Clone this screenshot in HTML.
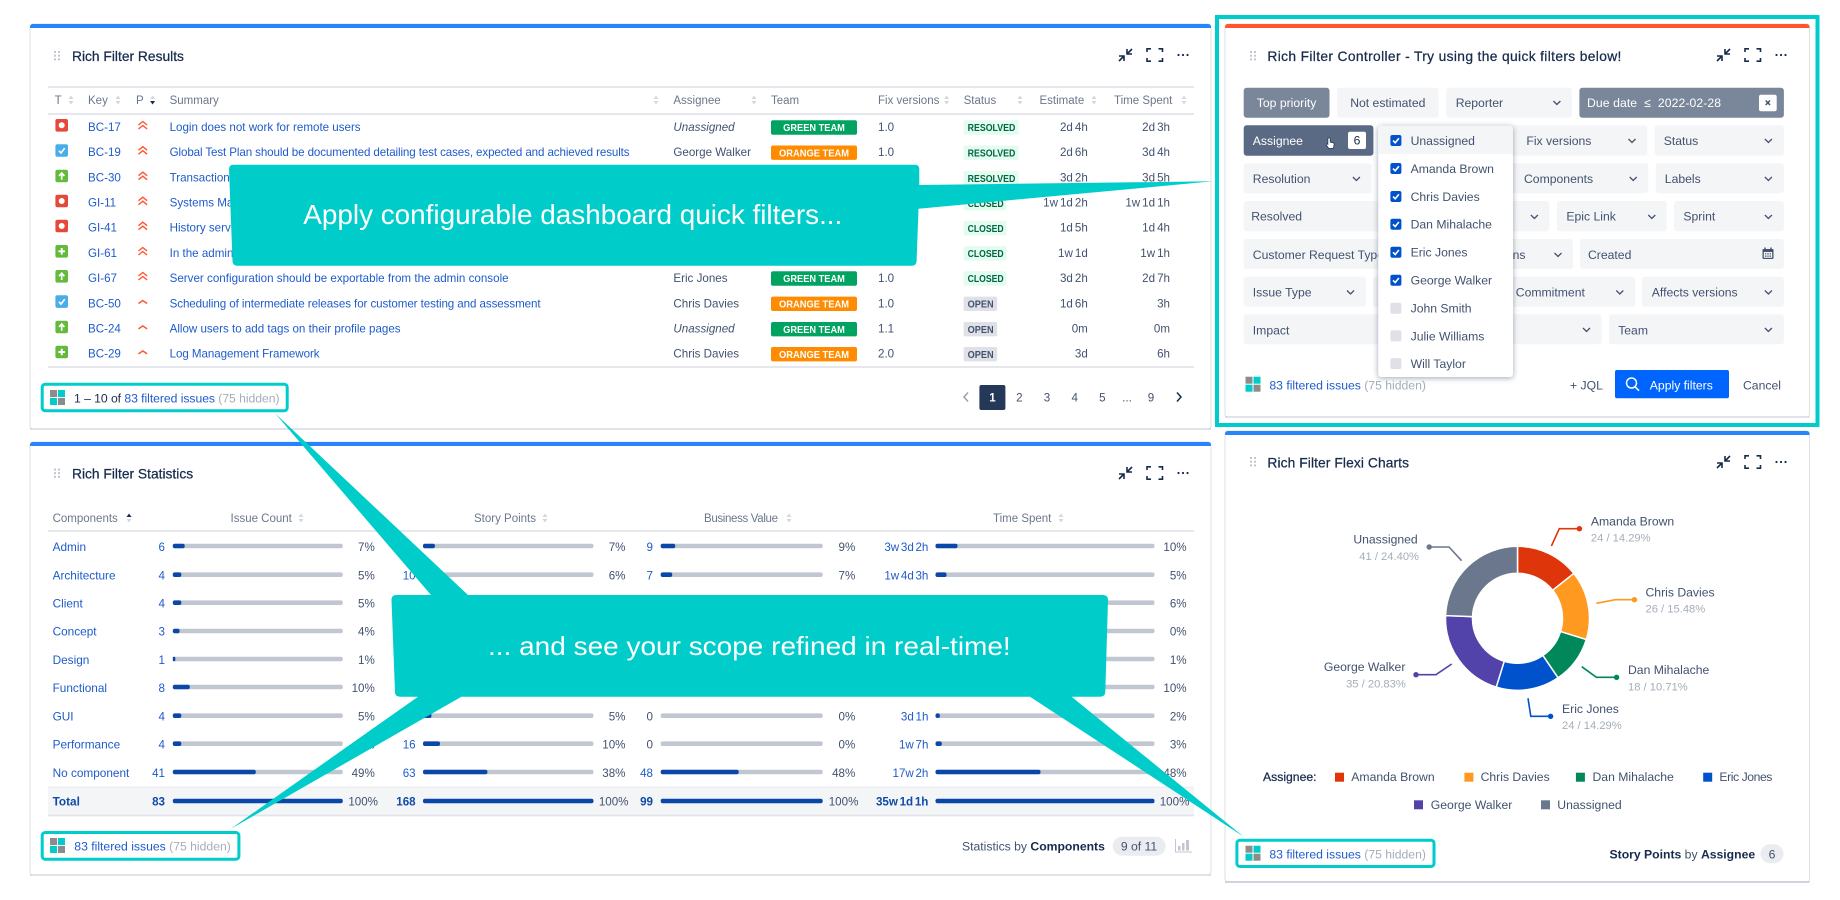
<!DOCTYPE html>
<html lang="en"><head><meta charset="utf-8"><title>Rich Filters</title>
<style>
html,body{margin:0;padding:0;background:#fff}
svg{display:block;filter:blur(.35px)}
text{font-family:"Liberation Sans",sans-serif;font-size:11.6px;fill:#42526e}
.l{fill:#1f5bcb}.h{fill:#6b778c;font-size:11.5px}.t{font-size:13.8px;fill:#172b4d;stroke:#172b4d;stroke-width:.25}
.e{text-anchor:end}.m{text-anchor:middle}.g{fill:#a5adba}.i{font-style:italic}.b{font-weight:bold}
.c{font-size:12.2px}.w{fill:#fff}.z{font-size:10px;font-weight:bold;fill:#fff}
.y{font-size:10px;font-weight:bold;fill:#006644}.o{font-size:10px;font-weight:bold;fill:#42526e}
.n{font-size:11.8px}.s{font-size:11.2px;fill:#a5adba}.k{fill:#172b4d}
.cb{font-size:28px;fill:#fff}.cs{font-size:26px;fill:#fff}
.f{fill:#f4f5f7}.d{word-spacing:-1.5px}
</style></head><body>
<svg xmlns="http://www.w3.org/2000/svg" width="1840" height="900" viewBox="0 0 1840 900">
<defs>
<g id="s"><path d="M-2.5-1 0-4.5 2.5-1ZM-2.5 1 0 4.5 2.5 1Z" fill="#d3d7de"/></g>
<g id="sd"><path d="M-2.5-1 0-4.5 2.5-1Z" fill="#d3d7de"/><path d="M-2.5 1 0 4.5 2.5 1Z" fill="#172b4d"/></g>
<g id="su"><path d="M-2.5-1 0-4.5 2.5-1Z" fill="#172b4d"/><path d="M-2.5 1 0 4.5 2.5 1Z" fill="#d3d7de"/></g>
<g id="bug"><rect width="12.6" height="12.6" rx="2" fill="#e5493a"/><circle cx="6.3" cy="6.3" r="3" fill="#fff"/></g>
<g id="task"><rect width="12.6" height="12.6" rx="2" fill="#4bade8"/><path d="M3.5 6.5 5.6 8.8 9.3 3.9" fill="none" stroke="#fff" stroke-width="1.6"/></g>
<g id="imp"><rect width="12.6" height="12.6" rx="2" fill="#63ba3c"/><path d="M6.3 10V3.5M3.6 6.2 6.3 3.3 9 6.2" fill="none" stroke="#fff" stroke-width="1.7"/></g>
<g id="new"><rect width="12.6" height="12.6" rx="2" fill="#63ba3c"/><path d="M6.3 3v6.6M3 6.3h6.6" fill="none" stroke="#fff" stroke-width="1.9"/></g>
<path id="p2" d="M1 5 5.3 1.5 9.6 5M1 9 5.3 5.5 9.6 9" fill="none" stroke="#ff5630" stroke-width="1.4"/>
<path id="p1" d="M1 5.5 5.3 2.5 9.6 5.5" fill="none" stroke="#ff5630" stroke-width="1.5"/>
<g id="hd" fill="#c1c7d0"><rect width="2" height="2"/><rect x="4" width="2" height="2"/><rect y="3.7" width="2" height="2"/><rect x="4" y="3.7" width="2" height="2"/><rect y="7.4" width="2" height="2"/><rect x="4" y="7.4" width="2" height="2"/></g>
<g id="ic"><g fill="none" stroke="#172b4d" stroke-width="1.6"><path d="M9 1V6H14M9.5 5.5 14 1M1 8H6V13M5.5 8.5 1 13"/><path d="M29 4V.8H33M40.500 .8H44.500V4M44.500 10V13.200H40.500M33 13.200H29V10"/></g><circle cx="60.500" cy="7" r="1.100" fill="#172b4d"/><circle cx="65" cy="7" r="1.100" fill="#172b4d"/><circle cx="69.500" cy="7" r="1.100" fill="#172b4d"/></g>
<g id="fi"><rect width="7" height="7" fill="#8c8c8c"/><rect x="8" width="7" height="7" fill="#00cccb"/><rect y="8" width="7" height="7" fill="#00cccb"/><rect x="8" y="8" width="7" height="7" fill="#8c8c8c"/></g>
<path id="ch" d="M-3.500-2 0 1.500 3.500-2" fill="none" stroke="#42526e" stroke-width="1.300"/>
<g id="on"><rect width="11" height="11" rx="2" fill="#0052cc"/><path d="M2.600 5.600 4.800 7.800 8.500 3.300" fill="none" stroke="#fff" stroke-width="1.600"/></g>
<rect id="off" width="11" height="11" rx="2" fill="#dfe1e6"/>
</defs>

<!-- Results panel -->
<rect x="30" y="24" width="1181" height="405" rx="3" fill="#fff" stroke="#dfe1e6"/>
<path d="M30 429H1211" stroke="#c1c7d0"/>
<path d="M30 28V27Q30 24 33 24H1208Q1211 24 1211 27V28Z" fill="#2684ff"/>
<use href="#hd" x="54" y="51"/>
<text x="72" y="61" class="t">Rich Filter Results</text>
<use href="#ic" x="1118" y="48"/>
<path d="M48 87H1194M48 114H1194M48 367H1194" stroke="#e2e4e9" stroke-width="1.800"/>
<g class="hr">
<text x="54.600" y="104" class="h">T</text><use href="#s" x="71" y="100"/>
<text x="88" y="104" class="h">Key</text><use href="#s" x="118" y="100"/>
<text x="136" y="104" class="h">P</text><use href="#sd" x="152.600" y="100"/>
<text x="169.600" y="104" class="h">Summary</text><use href="#s" x="656" y="100"/>
<text x="673.400" y="104" class="h">Assignee</text><use href="#s" x="754" y="100"/>
<text x="771" y="104" class="h">Team</text>
<text x="878" y="104" class="h">Fix versions</text><use href="#s" x="946.600" y="100"/>
<text x="963.600" y="104" class="h">Status</text><use href="#s" x="1020" y="100"/>
<text x="1039.500" y="104" class="h">Estimate</text><use href="#s" x="1094" y="100"/>
<text x="1114" y="104" class="h">Time Spent</text><use href="#s" x="1184" y="100"/>
</g>
<!-- rows -->
<use href="#bug" x="55.400" y="119"/><use href="#task" x="55.400" y="144.200"/><use href="#imp" x="55.400" y="169.700"/><use href="#bug" x="55.400" y="194.700"/><use href="#bug" x="55.400" y="219.700"/><use href="#new" x="55.400" y="245"/><use href="#imp" x="55.400" y="270"/><use href="#task" x="55.400" y="295.300"/><use href="#imp" x="55.400" y="320.700"/><use href="#new" x="55.400" y="345.700"/>
<use href="#p2" x="137.500" y="120"/><use href="#p2" x="137.500" y="145.200"/><use href="#p2" x="137.500" y="170.700"/><use href="#p2" x="137.500" y="195.700"/><use href="#p2" x="137.500" y="220.700"/><use href="#p2" x="137.500" y="246"/><use href="#p2" x="137.500" y="271"/><use href="#p1" x="137.500" y="298"/><use href="#p1" x="137.500" y="323.400"/><use href="#p1" x="137.500" y="348.400"/>
<text x="88" y="131" class="l">BC-17</text><text x="88" y="156.200" class="l">BC-19</text><text x="88" y="181.700" class="l">BC-30</text><text x="88" y="206.700" class="l">GI-11</text><text x="88" y="231.700" class="l">GI-41</text><text x="88" y="257" class="l">GI-61</text><text x="88" y="282" class="l">GI-67</text><text x="88" y="307.300" class="l">BC-50</text><text x="88" y="332.700" class="l">BC-24</text><text x="88" y="357.700" class="l">BC-29</text>
<text x="169.600" y="131" class="l" textLength="191">Login does not work for remote users</text>
<text x="169.600" y="156.200" class="l" textLength="460">Global Test Plan should be documented detailing test cases, expected and achieved results</text>
<text x="169.600" y="181.700" class="l">Transaction logging</text>
<text x="169.600" y="206.700" class="l">Systems Management</text>
<text x="169.600" y="231.700" class="l">History service</text>
<text x="169.600" y="257" class="l">In the admin console</text>
<text x="169.600" y="282" class="l" textLength="339">Server configuration should be exportable from the admin console</text>
<text x="169.600" y="307.300" class="l" textLength="371">Scheduling of intermediate releases for customer testing and assessment</text>
<text x="169.600" y="332.700" class="l" textLength="231">Allow users to add tags on their profile pages</text>
<text x="169.600" y="357.700" class="l" textLength="150">Log Management Framework</text>
<text x="673.400" y="131" class="i">Unassigned</text><text x="673.400" y="156.200">George Walker</text><text x="673.400" y="282">Eric Jones</text><text x="673.400" y="307.300">Chris Davies</text><text x="673.400" y="332.700" class="i">Unassigned</text><text x="673.400" y="357.700">Chris Davies</text>
<g fill="#00a35f"><rect x="771" y="120.300" width="86" height="14.400" rx="2"/><rect x="771" y="271.300" width="86" height="14.400" rx="2"/><rect x="771" y="322" width="86" height="14.400" rx="2"/></g>
<g fill="#ff8b00"><rect x="771" y="145.500" width="86" height="14.400" rx="2"/><rect x="771" y="296.600" width="86" height="14.400" rx="2"/><rect x="771" y="347" width="86" height="14.400" rx="2"/></g>
<text x="814" y="131.200" class="z m" textLength="61.700" lengthAdjust="spacingAndGlyphs">GREEN TEAM</text><text x="814" y="156.400" class="z m" textLength="70" lengthAdjust="spacingAndGlyphs">ORANGE TEAM</text><text x="814" y="282.200" class="z m" textLength="61.700" lengthAdjust="spacingAndGlyphs">GREEN TEAM</text><text x="814" y="307.500" class="z m" textLength="70" lengthAdjust="spacingAndGlyphs">ORANGE TEAM</text><text x="814" y="332.900" class="z m" textLength="61.700" lengthAdjust="spacingAndGlyphs">GREEN TEAM</text><text x="814" y="357.900" class="z m" textLength="70" lengthAdjust="spacingAndGlyphs">ORANGE TEAM</text>
<text x="878" y="131">1.0</text><text x="878" y="156.200">1.0</text><text x="878" y="282">1.0</text><text x="878" y="307.300">1.0</text><text x="878" y="332.700">1.1</text><text x="878" y="357.700">2.0</text>
<g fill="#e3fcef"><rect x="963.600" y="120.300" width="55" height="14.400" rx="2"/><rect x="963.600" y="145.500" width="55" height="14.400" rx="2"/><rect x="963.600" y="171" width="55" height="14.400" rx="2"/><rect x="963.600" y="196" width="43" height="14.400" rx="2"/><rect x="963.600" y="221" width="43" height="14.400" rx="2"/><rect x="963.600" y="246.300" width="43" height="14.400" rx="2"/><rect x="963.600" y="271.300" width="43" height="14.400" rx="2"/></g>
<g fill="#dfe1e6"><rect x="963.600" y="296.600" width="33.600" height="14.400" rx="2"/><rect x="963.600" y="322" width="33.600" height="14.400" rx="2"/><rect x="963.600" y="347" width="33.600" height="14.400" rx="2"/></g>
<text x="967.600" y="131.200" class="y" textLength="47.800" lengthAdjust="spacingAndGlyphs">RESOLVED</text><text x="967.600" y="156.400" class="y" textLength="47.800" lengthAdjust="spacingAndGlyphs">RESOLVED</text><text x="967.600" y="181.900" class="y" textLength="47.800" lengthAdjust="spacingAndGlyphs">RESOLVED</text><text x="967.600" y="206.900" class="y" textLength="36" lengthAdjust="spacingAndGlyphs">CLOSED</text><text x="967.600" y="231.900" class="y" textLength="36" lengthAdjust="spacingAndGlyphs">CLOSED</text><text x="967.600" y="257.200" class="y" textLength="36" lengthAdjust="spacingAndGlyphs">CLOSED</text><text x="967.600" y="282.200" class="y" textLength="36" lengthAdjust="spacingAndGlyphs">CLOSED</text><text x="967.600" y="307.500" class="o" textLength="26" lengthAdjust="spacingAndGlyphs">OPEN</text><text x="967.600" y="332.900" class="o" textLength="26" lengthAdjust="spacingAndGlyphs">OPEN</text><text x="967.600" y="357.900" class="o" textLength="26" lengthAdjust="spacingAndGlyphs">OPEN</text>
<g style="word-spacing:-1.2px">
<text x="1087.800" y="131" class="e">2d 4h</text><text x="1087.800" y="156.200" class="e">2d 6h</text><text x="1087.800" y="181.700" class="e">3d 2h</text><text x="1087.800" y="206.700" class="e">1w 1d 2h</text><text x="1087.800" y="231.700" class="e">1d 5h</text><text x="1087.800" y="257" class="e">1w 1d</text><text x="1087.800" y="282" class="e">3d 2h</text><text x="1087.800" y="307.300" class="e">1d 6h</text><text x="1087.800" y="332.700" class="e">0m</text><text x="1087.800" y="357.700" class="e">3d</text>
<text x="1170" y="131" class="e">2d 3h</text><text x="1170" y="156.200" class="e">3d 4h</text><text x="1170" y="181.700" class="e">3d 5h</text><text x="1170" y="206.700" class="e">1w 1d 1h</text><text x="1170" y="231.700" class="e">1d 4h</text><text x="1170" y="257" class="e">1w 1h</text><text x="1170" y="282" class="e">2d 7h</text><text x="1170" y="307.300" class="e">3h</text><text x="1170" y="332.700" class="e">0m</text><text x="1170" y="357.700" class="e">6h</text>
</g>
<!-- results footer -->
<rect x="42.200" y="384.200" width="245" height="26.600" rx="3" fill="none" stroke="#00cccb" stroke-width="3"/>
<use href="#fi" x="50" y="390"/>
<text x="74" y="402.700" class="c k" textLength="205.500">1 – 10 of <tspan class="l">83 filtered issues</tspan> <tspan class="g">(75 hidden)</tspan></text>
<path d="M968 392.500 964 397 968 401.500" fill="none" stroke="#97a0af" stroke-width="1.500"/>
<rect x="979.400" y="385" width="26" height="25" rx="2" fill="#253858"/>
<text x="992.500" y="401.500" class="m w b">1</text>
<text x="1019.400" y="401.500" class="m">2</text><text x="1047" y="401.500" class="m">3</text><text x="1074.700" y="401.500" class="m">4</text><text x="1102.400" y="401.500" class="m">5</text><text x="1127" y="401.500" class="m">...</text><text x="1151" y="401.500" class="m">9</text>
<path d="M1177 392.500 1181 397 1177 401.500" fill="none" stroke="#172b4d" stroke-width="1.500"/>

<!-- Controller -->
<rect x="1217" y="17" width="600.500" height="408" fill="none" stroke="#00cccb" stroke-width="4"/>
<rect x="1225" y="24" width="584.500" height="393" rx="3" fill="#fff" stroke="#dfe1e6"/>
<path d="M1225 417H1809.500" stroke="#c1c7d0"/>
<path d="M1225 28V27Q1225 24 1228 24H1806.500Q1809.500 24 1809.500 27V28Z" fill="#ff5630"/>
<use href="#hd" x="1250" y="51"/>
<text x="1267.400" y="61" class="t" textLength="354">Rich Filter Controller - Try using the quick filters below!</text>
<use href="#ic" x="1716" y="48"/>

<rect x="1243.700" y="87.700" width="85.800" height="30" rx="3" fill="#7a869a"/><text x="1286.600" y="106.800" class="m c w">Top priority</text>
<rect x="1337" y="87.700" width="101.700" height="30" rx="3" class="f"/><text x="1387.800" y="106.800" class="m c">Not estimated</text>
<rect x="1446.200" y="87.700" width="125.700" height="30" rx="3" class="f"/><text x="1455.700" y="107" class="c">Reporter</text><use href="#ch" x="1556.900" y="103"/>
<rect x="1579.400" y="87.700" width="204.500" height="30" rx="3" fill="#7a869a"/><text x="1587" y="107" class="c w" xml:space="preserve" textLength="134">Due date  ≤  2022-02-28</text>
<rect x="1759" y="94.700" width="17.700" height="16.500" rx="2" fill="#fff"/><path d="M1765.700 100.500 1770 105M1770 100.500 1765.700 105" stroke="#42526e" stroke-width="1.500"/>

<rect x="1243.700" y="125.300" width="129.700" height="30.400" rx="3" fill="#5a6a85"/><text x="1252.800" y="145" class="c w">Assignee</text>
<path d="M1329 137.800c.9 0 1.200.6 1.200 1.400v3l2.800.5c.9.2 1.200.8 1.100 1.600l-.4 2.800c-.1.900-.6 1.400-1.500 1.400h-2.600c-.6 0-1-.3-1.400-.8l-1.900-2.800c-.4-.6.300-1.300.9-.9l.7.500v-5.300c0-.8.200-1.400 1.100-1.400z" fill="#fff" stroke="#172b4d" stroke-width=".7"/>
<rect x="1348" y="131.700" width="18" height="17.300" rx="2" fill="#fff"/><text x="1357" y="144.700" class="m c k">6</text>
<rect x="1480" y="125.300" width="167.400" height="30.400" rx="3" class="f"/><text x="1526.400" y="145" class="c">Fix versions</text><use href="#ch" x="1632" y="141"/>
<rect x="1654.600" y="125.300" width="129.300" height="30.400" rx="3" class="f"/><text x="1663.700" y="145" class="c">Status</text><use href="#ch" x="1768.400" y="141"/>

<rect x="1243.700" y="163.300" width="128.100" height="30" rx="3" class="f"/><text x="1252.800" y="183" class="c">Resolution</text><use href="#ch" x="1356.400" y="179"/>
<rect x="1480" y="163.300" width="168.200" height="30" rx="3" class="f"/><text x="1524" y="183" class="c">Components</text><use href="#ch" x="1633.200" y="179"/>
<rect x="1655.700" y="163.300" width="128.200" height="30" rx="3" class="f"/><text x="1664.800" y="183" class="c">Labels</text><use href="#ch" x="1768.400" y="179"/>

<rect x="1243.700" y="201" width="150" height="30.300" rx="3" class="f"/><text x="1251.200" y="220.500" class="c">Resolved</text>
<rect x="1490" y="201" width="59.400" height="30.300" rx="3" class="f"/><use href="#ch" x="1534.400" y="217"/>
<rect x="1556.900" y="201" width="109.900" height="30.300" rx="3" class="f"/><text x="1566.400" y="220.500" class="c">Epic Link</text><use href="#ch" x="1651.800" y="217"/>
<rect x="1674" y="201" width="109.900" height="30.300" rx="3" class="f"/><text x="1683.400" y="220.500" class="c">Sprint</text><use href="#ch" x="1768.400" y="217"/>

<rect x="1243.700" y="239" width="150" height="30" rx="3" class="f"/><text x="1252.800" y="259" class="c">Customer Request Type</text>
<rect x="1490" y="239" width="83" height="30" rx="3" class="f"/><text x="1512.600" y="259" class="c">ns</text><use href="#ch" x="1558" y="255"/>
<rect x="1580" y="239" width="203.900" height="30" rx="3" class="f"/><text x="1588" y="259" class="c">Created</text>
<g><rect x="1762.500" y="249" width="11" height="10" rx="1" fill="#42526e"/><path d="M1765 247.500v3M1771 247.500v3" stroke="#42526e" stroke-width="1.400"/><path d="M1763.800 252h8.400v5.800h-8.400z" fill="#f4f5f7"/><path d="M1765 253.200h1.400v1.200H1765zM1767.300 253.200h1.400v1.200h-1.400zM1769.600 253.200h1.400v1.200h-1.400zM1765 255.500h1.400v1.200H1765zM1767.300 255.500h1.400v1.200h-1.400zM1769.600 255.500h1.400v1.200h-1.400z" fill="#42526e"/></g>

<rect x="1243.700" y="276.700" width="122.200" height="30" rx="3" class="f"/><text x="1252.800" y="296.500" class="c">Issue Type</text><use href="#ch" x="1350.500" y="292.500"/>
<rect x="1373" y="276.700" width="30" height="30" rx="3" class="f"/>
<rect x="1480" y="276.700" width="155.200" height="30" rx="3" class="f"/><text x="1515.800" y="296.500" class="c">Commitment</text><use href="#ch" x="1619.800" y="292.500"/>
<rect x="1641.900" y="276.700" width="142" height="30" rx="3" class="f"/><text x="1651.800" y="296.500" class="c">Affects versions</text><use href="#ch" x="1768.400" y="292.500"/>

<rect x="1243.700" y="314.300" width="150" height="30" rx="3" class="f"/><text x="1252.800" y="334.500" class="c">Impact</text>
<rect x="1490" y="314.300" width="111.600" height="30" rx="3" class="f"/><use href="#ch" x="1586.500" y="330"/>
<rect x="1609" y="314.300" width="174.900" height="30" rx="3" class="f"/><text x="1618.200" y="334.500" class="c">Team</text><use href="#ch" x="1768.400" y="330"/>

<use href="#fi" x="1245.500" y="376.700"/>
<text x="1269.400" y="389.300" class="c"><tspan class="l">83 filtered issues</tspan> <tspan class="g">(75 hidden)</tspan></text>
<text x="1570" y="389.300" class="c">+ JQL</text>
<rect x="1615" y="370" width="114" height="28.300" rx="2" fill="#0065ff"/>
<circle cx="1631.500" cy="383" r="5" fill="none" stroke="#fff" stroke-width="1.500"/><path d="M1635 386.800 1639 390.700" stroke="#fff" stroke-width="1.600"/>
<text x="1649.800" y="389.300" class="c w">Apply filters</text>
<text x="1743" y="389.300" class="c">Cancel</text>

<!-- dropdown -->
<rect x="1378.200" y="125.700" width="134.800" height="251.300" rx="3" fill="#fff" style="filter:drop-shadow(0 1px 3px rgba(9,30,66,.4))"/>
<path d="M1378.200 154V128.700Q1378.200 125.700 1381.200 125.700H1510Q1513 125.700 1513 128.700V154Z" fill="#f4f5f7"/>
<use href="#on" x="1390.400" y="135"/><use href="#on" x="1390.400" y="163"/><use href="#on" x="1390.400" y="191"/><use href="#on" x="1390.400" y="218.700"/><use href="#on" x="1390.400" y="246.700"/><use href="#on" x="1390.400" y="274.700"/><use href="#off" x="1390.400" y="302.700"/><use href="#off" x="1390.400" y="330.400"/><use href="#off" x="1390.400" y="358.100"/>
<text x="1410.600" y="145" class="c">Unassigned</text><text x="1410.600" y="173" class="c">Amanda Brown</text><text x="1410.600" y="201" class="c">Chris Davies</text><text x="1410.600" y="228.700" class="c">Dan Mihalache</text><text x="1410.600" y="256.700" class="c">Eric Jones</text><text x="1410.600" y="284.700" class="c">George Walker</text><text x="1410.600" y="312.700" class="c">John Smith</text><text x="1410.600" y="340.400" class="c">Julie Williams</text><text x="1410.600" y="368" class="c">Will Taylor</text>

<!-- Statistics -->
<rect x="30" y="442" width="1181" height="433" rx="3" fill="#fff" stroke="#dfe1e6"/>
<path d="M30 875H1211" stroke="#c1c7d0"/>
<path d="M30 446V445Q30 442 33 442H1208Q1211 442 1211 445V446Z" fill="#2684ff"/>
<use href="#hd" x="54" y="468.500"/>
<text x="72" y="478.700" class="t">Rich Filter Statistics</text>
<use href="#ic" x="1118" y="466"/>
<text x="52.600" y="522" class="h">Components</text><use href="#su" x="129" y="518"/>
<text x="230.500" y="522" class="h">Issue Count</text><use href="#s" x="301" y="518"/>
<text x="474" y="522" class="h">Story Points</text><use href="#s" x="545" y="518"/>
<text x="704" y="522" class="h" textLength="74">Business Value</text><use href="#s" x="789" y="518"/>
<text x="993" y="522" class="h">Time Spent</text><use href="#s" x="1061" y="518"/>
<path d="M48 531H1194" stroke="#e2e4e9" stroke-width="1.800"/>
<rect x="48" y="786.700" width="1146" height="29" fill="#f4f5f7"/>
<path d="M48 787H1194" stroke="#ebecf0"/><path d="M48 815.500H1194" stroke="#e2e4e9" stroke-width="1.800"/>
<text x="52.600" y="551" class="l n">Admin</text><text x="52.600" y="579.300" class="l n">Architecture</text><text x="52.600" y="607.700" class="l n">Client</text><text x="52.600" y="635.700" class="l n">Concept</text><text x="52.600" y="664" class="l n">Design</text><text x="52.600" y="692" class="l n">Functional</text><text x="52.600" y="720.300" class="l n">GUI</text><text x="52.600" y="748.700" class="l n">Performance</text><text x="52.600" y="777" class="l n">No component</text><text x="52.600" y="805.700" class="n b" style="fill:#0f4aa8">Total</text>
<!-- col1 -->
<g fill="#c1c7d0"><rect x="172.800" y="543.700" width="170" height="4.600" rx="2"/><rect x="172.800" y="572.400" width="170" height="4.600" rx="2"/><rect x="172.800" y="600.400" width="170" height="4.600" rx="2"/><rect x="172.800" y="628.700" width="170" height="4.600" rx="2"/><rect x="172.800" y="656.700" width="170" height="4.600" rx="2"/><rect x="172.800" y="684.700" width="170" height="4.600" rx="2"/><rect x="172.800" y="713.400" width="170" height="4.600" rx="2"/><rect x="172.800" y="741.400" width="170" height="4.600" rx="2"/><rect x="172.800" y="769.700" width="170" height="4.600" rx="2"/>
<rect x="423" y="543.700" width="170.500" height="4.600" rx="2"/><rect x="423" y="572.400" width="170.500" height="4.600" rx="2"/><rect x="423" y="713.400" width="170.500" height="4.600" rx="2"/><rect x="423" y="741.400" width="170.500" height="4.600" rx="2"/><rect x="423" y="769.700" width="170.500" height="4.600" rx="2"/>
<rect x="660.700" y="543.700" width="162" height="4.600" rx="2"/><rect x="660.700" y="572.400" width="162" height="4.600" rx="2"/><rect x="660.700" y="713.400" width="162" height="4.600" rx="2"/><rect x="660.700" y="741.400" width="162" height="4.600" rx="2"/><rect x="660.700" y="769.700" width="162" height="4.600" rx="2"/>
<rect x="935.500" y="543.700" width="219" height="4.600" rx="2"/><rect x="935.500" y="572.400" width="219" height="4.600" rx="2"/><rect x="935.500" y="600.400" width="219" height="4.600" rx="2"/><rect x="935.500" y="628.700" width="219" height="4.600" rx="2"/><rect x="935.500" y="656.700" width="219" height="4.600" rx="2"/><rect x="935.500" y="684.700" width="219" height="4.600" rx="2"/><rect x="935.500" y="713.400" width="219" height="4.600" rx="2"/><rect x="935.500" y="741.400" width="219" height="4.600" rx="2"/><rect x="935.500" y="769.700" width="219" height="4.600" rx="2"/></g>
<g fill="#0a47a8"><rect x="172.800" y="543.700" width="11.900" height="4.600" rx="2"/><rect x="172.800" y="572.400" width="8.500" height="4.600" rx="2"/><rect x="172.800" y="600.400" width="8.500" height="4.600" rx="2"/><rect x="172.800" y="628.700" width="6.800" height="4.600" rx="2"/><rect x="172.800" y="656.700" width="2.500" height="4.600" rx="1"/><rect x="172.800" y="684.700" width="17" height="4.600" rx="2"/><rect x="172.800" y="713.400" width="8.500" height="4.600" rx="2"/><rect x="172.800" y="741.400" width="8.500" height="4.600" rx="2"/><rect x="172.800" y="769.700" width="83" height="4.600" rx="2"/><rect x="172.800" y="798.700" width="170" height="4.600" rx="2"/>
<rect x="423" y="543.700" width="11.900" height="4.600" rx="2"/><rect x="423" y="572.400" width="10" height="4.600" rx="2"/><rect x="423" y="713.400" width="8.500" height="4.600" rx="2"/><rect x="423" y="741.400" width="17" height="4.600" rx="2"/><rect x="423" y="769.700" width="64.400" height="4.600" rx="2"/><rect x="423" y="798.700" width="170.500" height="4.600" rx="2"/>
<rect x="660.700" y="543.700" width="14.500" height="4.600" rx="2"/><rect x="660.700" y="572.400" width="11.500" height="4.600" rx="2"/><rect x="660.700" y="769.700" width="78" height="4.600" rx="2"/><rect x="660.700" y="798.700" width="162" height="4.600" rx="2"/>
<rect x="935.500" y="543.700" width="22" height="4.600" rx="2"/><rect x="935.500" y="572.400" width="11" height="4.600" rx="2"/><rect x="935.500" y="713.400" width="4.400" height="4.600" rx="2"/><rect x="935.500" y="741.400" width="6.300" height="4.600" rx="2"/><rect x="935.500" y="769.700" width="105" height="4.600" rx="2"/><rect x="935.500" y="798.700" width="219" height="4.600" rx="2"/></g>
<text x="165" y="551" class="e l">6</text><text x="165" y="579.300" class="e l">4</text><text x="165" y="607.700" class="e l">4</text><text x="165" y="635.700" class="e l">3</text><text x="165" y="664" class="e l">1</text><text x="165" y="692" class="e l">8</text><text x="165" y="720.300" class="e l">4</text><text x="165" y="748.700" class="e l">4</text><text x="165" y="777" class="e l">41</text><text x="165" y="805.700" class="e b" style="fill:#0f4aa8">83</text>
<text x="374.800" y="551" class="e">7%</text><text x="374.800" y="579.300" class="e">5%</text><text x="374.800" y="607.700" class="e">5%</text><text x="374.800" y="635.700" class="e">4%</text><text x="374.800" y="664" class="e">1%</text><text x="374.800" y="692" class="e">10%</text><text x="374.800" y="720.300" class="e">5%</text><text x="374.800" y="748.700" class="e">5%</text><text x="374.800" y="777" class="e">49%</text><text x="378" y="805.700" class="e">100%</text>
<text x="415.600" y="579.300" class="e l">10</text><text x="415.600" y="748.700" class="e l">16</text><text x="415.600" y="777" class="e l">63</text><text x="415.600" y="805.700" class="e b" style="fill:#0f4aa8">168</text>
<text x="625.500" y="551" class="e">7%</text><text x="625.500" y="579.300" class="e">6%</text><text x="625.500" y="720.300" class="e">5%</text><text x="625.500" y="748.700" class="e">10%</text><text x="625.500" y="777" class="e">38%</text><text x="628.500" y="805.700" class="e">100%</text>
<text x="653" y="551" class="e l">9</text><text x="653" y="579.300" class="e l">7</text><text x="653" y="720.300" class="e">0</text><text x="653" y="748.700" class="e">0</text><text x="653" y="777" class="e l">48</text><text x="653" y="805.700" class="e b" style="fill:#0f4aa8">99</text>
<text x="855.300" y="551" class="e">9%</text><text x="855.300" y="579.300" class="e">7%</text><text x="855.300" y="720.300" class="e">0%</text><text x="855.300" y="748.700" class="e">0%</text><text x="855.300" y="777" class="e">48%</text><text x="858.400" y="805.700" class="e">100%</text>
<text x="928.400" y="551" class="e l d">3w 3d 2h</text><text x="928.400" y="579.300" class="e l d">1w 4d 3h</text><text x="928.400" y="720.300" class="e l d">3d 1h</text><text x="928.400" y="748.700" class="e l d">1w 7h</text><text x="928.400" y="777" class="e l d">17w 2h</text><text x="928.400" y="805.700" class="e b d" style="fill:#0f4aa8">35w 1d 1h</text>
<text x="1186.600" y="551" class="e">10%</text><text x="1186.600" y="579.300" class="e">5%</text><text x="1186.600" y="607.700" class="e">6%</text><text x="1186.600" y="635.700" class="e">0%</text><text x="1186.600" y="664" class="e">1%</text><text x="1186.600" y="692" class="e">10%</text><text x="1186.600" y="720.300" class="e">2%</text><text x="1186.600" y="748.700" class="e">3%</text><text x="1186.600" y="777" class="e">48%</text><text x="1189.400" y="805.700" class="e">100%</text>
<rect x="42.200" y="832.500" width="196.700" height="26.700" rx="3" fill="none" stroke="#00cccb" stroke-width="3"/>
<use href="#fi" x="50" y="838"/>
<text x="74.300" y="850.700" class="c"><tspan class="l">83 filtered issues</tspan> <tspan class="g">(75 hidden)</tspan></text>
<text x="962" y="850.700" class="c">Statistics by <tspan class="b k">Components</tspan></text>
<rect x="1112.700" y="836.700" width="53" height="19" rx="9.500" fill="#ebecf0"/><text x="1139" y="850.700" class="m c">9 of 11</text>
<path d="M1175.500 839V852H1192" fill="none" stroke="#c1c7d0"/><g fill="#c1c7d0"><rect x="1178" y="846" width="2.500" height="4.500"/><rect x="1182" y="843" width="2.500" height="7.500"/><rect x="1186" y="840" width="3" height="10.500"/></g>

<!-- Flexi -->
<rect x="1225" y="431" width="584.500" height="451" rx="3" fill="#fff" stroke="#dfe1e6"/>
<path d="M1225 882H1809.500" stroke="#c1c7d0" stroke-width="1.500"/>
<path d="M1225 435V434Q1225 431 1228 431H1806.500Q1809.500 431 1809.500 434V435Z" fill="#2684ff"/>
<use href="#hd" x="1250" y="457"/>
<text x="1267.400" y="467.700" class="t" textLength="141.600">Rich Filter Flexi Charts</text>
<use href="#ic" x="1716" y="455"/>
<g stroke="#fff" stroke-width="1.500">
<path d="M1517.500 546.300A72 72 0 0 1 1573.800 573.430L1552.690 590.260A45 45 0 0 0 1517.500 573.300Z" fill="#de350b"/>
<path d="M1573.800 573.430A72 72 0 0 1 1586.290 639.550L1560.490 631.580A45 45 0 0 0 1552.690 590.260Z" fill="#ff991f"/>
<path d="M1586.290 639.550A72 72 0 0 1 1558.050 677.790L1542.840 655.480A45 45 0 0 0 1560.490 631.580Z" fill="#00875a"/>
<path d="M1558.050 677.790A72 72 0 0 1 1496.250 687.090L1504.220 661.290A45 45 0 0 0 1542.840 655.480Z" fill="#0052cc"/>
<path d="M1496.250 687.090A72 72 0 0 1 1445.550 615.590L1472.530 616.600A45 45 0 0 0 1504.220 661.290Z" fill="#5243aa"/>
<path d="M1445.550 615.590A72 72 0 0 1 1517.500 546.300V573.300A45 45 0 0 0 1472.530 616.600Z" fill="#6b778c"/>
</g>
<g fill="none" stroke-width="1.600">
<path d="M1579.400 528.700H1559.300L1551.400 546" stroke="#de350b"/>
<path d="M1634.400 599.700H1615.400L1596.400 603.300" stroke="#ff991f"/>
<path d="M1616.600 677.300H1596.400L1581.800 666.700" stroke="#00875a"/>
<path d="M1550.600 716.300H1530.800L1528 698.300" stroke="#0052cc"/>
<path d="M1416 674.700H1435.900L1451.700 664" stroke="#5243aa"/>
<path d="M1429.200 547H1449L1461.600 560.700" stroke="#6b778c"/>
</g>
<circle cx="1579.400" cy="528.700" r="2.700" fill="#de350b"/><circle cx="1634.400" cy="599.700" r="2.700" fill="#ff991f"/><circle cx="1616.600" cy="677.300" r="2.700" fill="#00875a"/><circle cx="1550.600" cy="716.300" r="2.700" fill="#0052cc"/><circle cx="1416" cy="674.700" r="2.700" fill="#5243aa"/><circle cx="1429.200" cy="547" r="2.700" fill="#6b778c"/>
<text x="1590.900" y="525.700" class="c">Amanda Brown</text><text x="1590.900" y="541.700" class="s">24 / 14.29%</text>
<text x="1645.500" y="596.700" class="c">Chris Davies</text><text x="1645.500" y="612.700" class="s">26 / 15.48%</text>
<text x="1628" y="674" class="c">Dan Mihalache</text><text x="1628" y="690.700" class="s">18 / 10.71%</text>
<text x="1562" y="713" class="c">Eric Jones</text><text x="1562" y="729" class="s">24 / 14.29%</text>
<text x="1405.400" y="671" class="c e">George Walker</text><text x="1405.800" y="687.700" class="s e">35 / 20.83%</text>
<text x="1417.700" y="543.700" class="c e">Unassigned</text><text x="1419" y="560" class="s e">41 / 24.40%</text>
<text x="1263" y="781.200" class="c k" style="stroke:#172b4d;stroke-width:.25">Assignee:</text>
<rect x="1335" y="772.700" width="9" height="9" fill="#de350b"/><text x="1351.300" y="781.200" class="c">Amanda Brown</text>
<rect x="1464.400" y="772.700" width="9" height="9" fill="#ff991f"/><text x="1480.600" y="781.200" class="c">Chris Davies</text>
<rect x="1575.900" y="772.700" width="9" height="9" fill="#00875a"/><text x="1592.500" y="781.200" class="c">Dan Mihalache</text>
<rect x="1703.200" y="772.700" width="9" height="9" fill="#0052cc"/><text x="1719.400" y="781.200" class="c" textLength="53">Eric Jones</text>
<rect x="1414" y="800.300" width="9" height="9" fill="#5243aa"/><text x="1430.800" y="809" class="c">George Walker</text>
<rect x="1541" y="800.300" width="9" height="9" fill="#6b778c"/><text x="1557.300" y="809" class="c">Unassigned</text>
<rect x="1236.900" y="840.200" width="197.100" height="26.300" rx="3" fill="none" stroke="#00cccb" stroke-width="3"/>
<use href="#fi" x="1245.500" y="845.700"/>
<text x="1269.400" y="858.700" class="c"><tspan class="l">83 filtered issues</tspan> <tspan class="g">(75 hidden)</tspan></text>
<text x="1609.500" y="858.700" class="c"><tspan class="b k">Story Points</tspan> by <tspan class="b k">Assignee</tspan></text>
<rect x="1760.500" y="844.300" width="23" height="19" rx="9.500" fill="#ebecf0"/><text x="1772" y="858.500" class="m c">6</text>

<!-- callouts -->
<path d="M233.500 164.700H915Q919.300 164.700 919.300 169V185L1213 181.300 918.500 208.700 916.600 261Q916.400 265.700 912 265.700H237Q232.700 265.700 232.500 261L229 169Q229 164.700 233.500 164.700Z" fill="#00ccca"/>
<text x="303.300" y="224" class="cb" textLength="539" lengthAdjust="spacingAndGlyphs">Apply configurable dashboard quick filters...</text>
<path d="M396 595H431L275 413.300 468 595H1103Q1108 595 1108 600L1105.300 692Q1105.200 696.700 1100 696.700H1071.600L1243.700 836.700 1030 696.700H461.400L230.500 829 418 696.700H400Q395 696.700 395 692L391.500 600Q391.500 595 396 595Z" fill="#00ccca"/>
<text x="488" y="655" class="cs" textLength="522.700" lengthAdjust="spacingAndGlyphs">... and see your scope refined in real-time!</text>
</svg>
</body></html>
